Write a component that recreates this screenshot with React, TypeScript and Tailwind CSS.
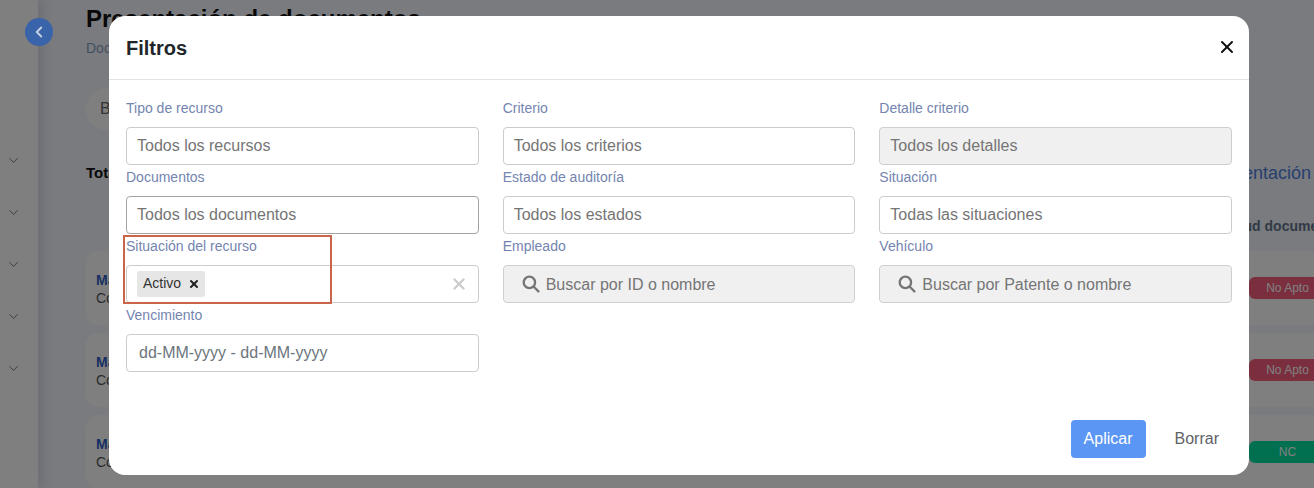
import { ChevronDown, ChevronLeft, X } from 'lucide-react';

const font = { sans: "font-['Liberation_Sans',Arial,sans-serif]" };

const Field = ({ label, children }: { label: string; children: React.ReactNode }) => (
  <div className="h-[69px]">
    <label className="block h-[31px] pt-[2px] text-[14px] leading-[20px] text-[#7484b0]">{label}</label>
    {children}
  </div>
);

const SelectBox = ({ text, disabled, focused }: { text: string; disabled?: boolean; focused?: boolean }) => (
  <div
    className={`flex h-[38px] items-center rounded-[4px] border px-[10px] text-[16px] text-[#757575] ${
      disabled ? 'border-[#cfcfcf] bg-[#f0f0f0]' : focused ? 'border-[#a3a3a3] bg-white' : 'border-[#cccccc] bg-white'
    }`}
  >
    {text}
  </div>
);

const SearchIcon = () => (
  <svg width="18" height="18" viewBox="0 0 18 18" fill="none" stroke="#757575" strokeWidth="2.3" strokeLinecap="round">
    <circle cx="7.4" cy="7.4" r="5.7" />
    <path d="M11.8 11.8 16.4 16.4" />
  </svg>
);

const SearchBox = ({ text }: { text: string }) => (
  <div className="flex h-[38px] items-center gap-[6px] rounded-[4px] border border-[#cfcfcf] bg-[#f0f0f0] pl-[18px] text-[16px] text-[#757575]">
    <SearchIcon />
    <span className="pt-[1px]">{text}</span>
  </div>
);

const DocCard = ({ badge, tone }: { badge: string; tone: string }) => (
  <div className="flex h-[74px] rounded-l-[12px] bg-white pl-[10px]">
    <div className="flex-1 pt-[19px] text-[14px] leading-[20px]">
      <div className="font-bold text-[#2f5fc4]">Mario Gonzalez</div>
      <div className="mt-[-2px] text-[#555]">Conductor</div>
    </div>
    <div className={`mr-[-12px] mt-[26px] flex h-[22px] w-[77px] shrink-0 items-center justify-center rounded-l-[6px] pb-[1px] text-[12px] text-white ${tone}`}>
      {badge}
    </div>
  </div>
);

export default function App() {
  return (
    <div className={`relative h-[488px] w-[1314px] overflow-hidden bg-[#f3f7ff] ${font.sans}`}>
      {/* pagina de fondo */}
      <div className="flex h-full">
        <aside className="flex w-[38px] flex-col items-start bg-white pl-[6px] pt-[152px] shadow-[6px_0_10px_rgba(40,50,70,0.12)]">
          {[0, 1, 2, 3, 4].map((i) => (
            <div key={i} className="flex h-[52px] justify-center pt-[1px]">
              <ChevronDown size={15} strokeWidth={1.25} className="text-[#555]" />
            </div>
          ))}
        </aside>
        <main className="min-w-0 flex-1 pl-[48px] pt-[3px]">
          <h1 className="text-[24px] font-bold leading-[32px] text-[#111]">Presentación de documentos</h1>
          <p className="mt-[3px] text-[14px] leading-[20px] text-[#889cc0]">Documentos</p>
          <div className="mt-[30px] flex h-[42px] w-[300px] items-center rounded-full bg-white pl-[14px] text-[16px] text-[#666]">
            Buscar
          </div>
          <div className="mt-[33px] flex h-[20px] items-center justify-between pr-[3px]">
            <span className="text-[15px] font-bold text-[#111]">Total: 3</span>
            <span className="text-[18px] text-[#4f7fdc]">Nueva presentación</span>
          </div>
          <div className="mt-[33px] h-[20px] text-right text-[14px] font-bold whitespace-nowrap text-[#64748b]">
            <span className="mr-[-26px]">Solicitud documento</span>
          </div>
          <div className="mt-[15px] flex flex-col gap-[8px]">
            <DocCard badge="No Apto" tone="bg-[#f65d7d]" />
            <DocCard badge="No Apto" tone="bg-[#f65d7d]" />
            <DocCard badge="NC" tone="bg-[#00e0a0]" />
          </div>
        </main>
      </div>

      <div className="absolute inset-0 bg-black/50" />

      {/* boton volver */}
      <button className="absolute left-[25px] top-[18px] flex h-[28px] w-[28px] items-center justify-center rounded-full bg-[#3a64aa] text-[#c5d0e4]">
        <ChevronLeft size={18} strokeWidth={2.5} />
      </button>

      {/* modal */}
      <div className="absolute left-[109px] top-[16px] flex h-[459px] w-[1140px] flex-col rounded-[16px] bg-white">
        <div className="flex h-[64px] items-center justify-between border-b border-[#e3e3e3] pl-[17px] pr-[12px]">
          <h2 className="text-[20px] font-bold text-[#212529]">Filtros</h2>
          <X size={20} strokeWidth={2.4} className="mt-[-1px] text-[#111]" />
        </div>
        <div className="grid grid-cols-3 gap-x-[24px] pl-[17px] pr-[17px] pt-[16px]">
          <Field label="Tipo de recurso">
            <SelectBox text="Todos los recursos" />
          </Field>
          <Field label="Criterio">
            <SelectBox text="Todos los criterios" />
          </Field>
          <Field label="Detalle criterio">
            <SelectBox text="Todos los detalles" disabled />
          </Field>
          <Field label="Documentos">
            <SelectBox text="Todos los documentos" focused />
          </Field>
          <Field label="Estado de auditoría">
            <SelectBox text="Todos los estados" />
          </Field>
          <Field label="Situación">
            <SelectBox text="Todas las situaciones" />
          </Field>
          <Field label="Situación del recurso">
            <div className="flex h-[38px] items-center justify-between rounded-[4px] border border-[#cccccc] bg-white pl-[10px] pr-[10px]">
              <div className="flex h-[26px] w-[68px] items-center rounded-[2px] bg-[#e6e6e6] pb-[1px] pl-[6px] text-[14px] text-[#333]">
                Activo
                <X size={12} strokeWidth={4} className="ml-[7px] mt-[1px] text-[#222]" />
              </div>
              <X size={18} strokeWidth={3.2} className="text-[#cccccc]" />
            </div>
          </Field>
          <Field label="Empleado">
            <SearchBox text="Buscar por ID o nombre" />
          </Field>
          <Field label="Vehículo">
            <SearchBox text="Buscar por Patente o nombre" />
          </Field>
          <Field label="Vencimiento">
            <div className="flex h-[38px] items-center rounded-[4px] border border-[#cccccc] bg-white px-[12px] text-[16px] text-[#6c757d]">
              dd-MM-yyyy - dd-MM-yyyy
            </div>
          </Field>
        </div>
        <div className="mt-auto flex items-center justify-end pb-[17px] pr-[30px]">
          <button className="h-[38px] w-[75px] rounded-[4px] bg-[#5b96f5] text-[16px] text-white">Aplicar</button>
          <button className="ml-[29px] text-[16px] text-[#5f6368]">Borrar</button>
        </div>
      </div>

      {/* marca de resaltado */}
      <div className="absolute left-[123px] top-[235px] h-[69px] w-[209px] border-2 border-[#c8654a]" />
    </div>
  );
}
